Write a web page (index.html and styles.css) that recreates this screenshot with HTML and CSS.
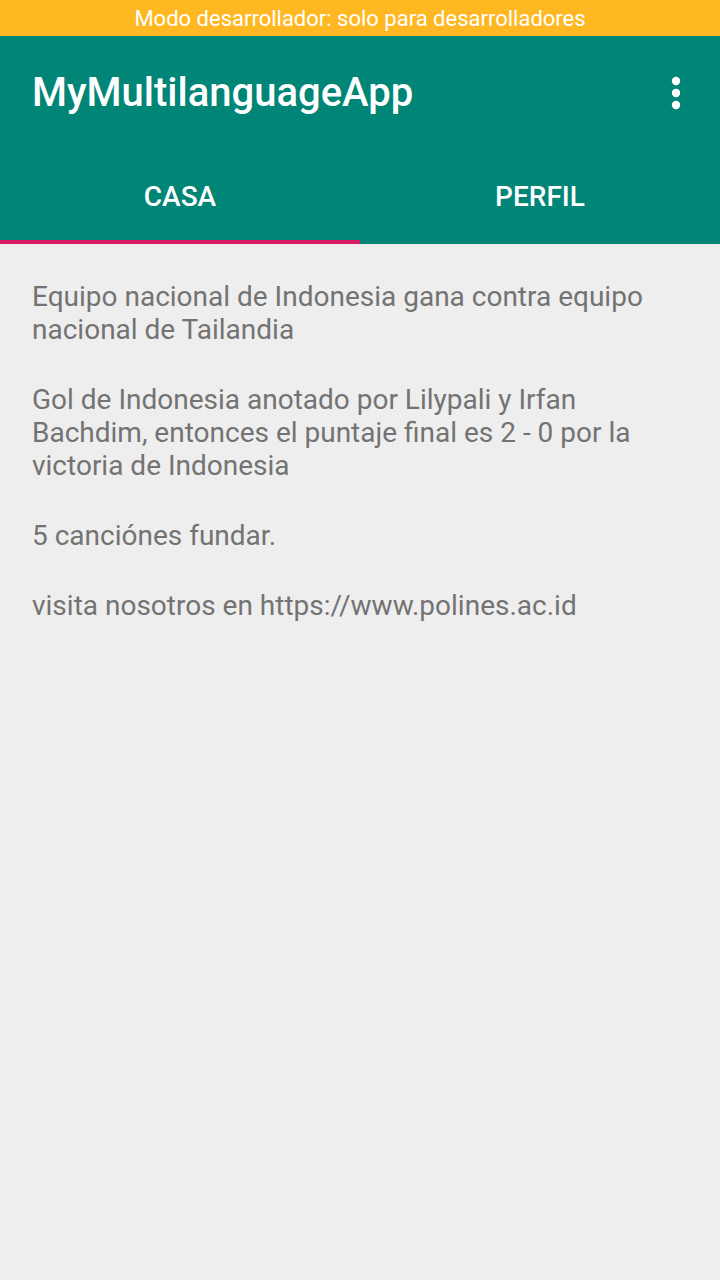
FILE: index.html
```html
<!DOCTYPE html>
<html>
<head>
<meta charset="utf-8">
<link rel="stylesheet" href="styles.css">
</head>
<body>
<div class="screen">
  <div class="devbar">Modo desarrollador: solo para desarrolladores</div>
  <header class="appbar">
    <div class="toolbar">
      <h1 class="title">MyMultilanguageApp</h1>
      <svg class="more" width="12" height="36" viewBox="0 0 12 36"><circle cx="6" cy="6" r="4.2" fill="#fff"/><circle cx="6" cy="18" r="4.2" fill="#fff"/><circle cx="6" cy="30" r="4.2" fill="#fff"/></svg>
    </div>
    <nav class="tabs">
      <div class="tab active">CASA</div>
      <div class="tab">PERFIL</div>
    </nav>
  </header>
  <main class="content">
    <p>Equipo nacional de Indonesia gana contra equipo nacional de Tailandia</p>
    <p>Gol de Indonesia anotado por Lilypali y Irfan Bachdim, entonces el puntaje final es 2 - 0 por la victoria de Indonesia</p>
    <p>5 canciónes fundar.</p>
    <p>visita nosotros en https://www.polines.ac.id</p>
  </main>
</div>
</body>
</html>
```
FILE: styles.css
```css
* { box-sizing: border-box; }
html, body { margin: 0; padding: 0; }
body { font-family: Roboto, "Noto Sans", sans-serif; background: #eeeeee; }
.screen { width: 720px; height: 1280px; background: #eeeeee; display: flex; flex-direction: column; }
.devbar { height: 36px; background: #ffb822; color: #fff; font-size: 22px; display: flex; align-items: center; justify-content: center; }
.appbar { background: #008577; }
.toolbar { height: 112px; display: flex; align-items: center; justify-content: space-between; padding: 0 38px 0 32px; }
.title { margin: 0; font-size: 40px; font-weight: 500; color: #fff; }
.more { display: block; margin-top: 2px; }
.tabs { height: 96px; display: flex; }
.tab { flex: 1; display: flex; align-items: center; justify-content: center; color: #fff; font-size: 28px; font-weight: 500; border-bottom: 4px solid transparent; padding-top: 4px; }
.tab.active { border-bottom-color: #d81b60; }
.content { padding: 36px 32px 0 32px; color: #737373; font-size: 28px; line-height: 33px; }
.content p { margin: 0 0 37px 0; }
```
